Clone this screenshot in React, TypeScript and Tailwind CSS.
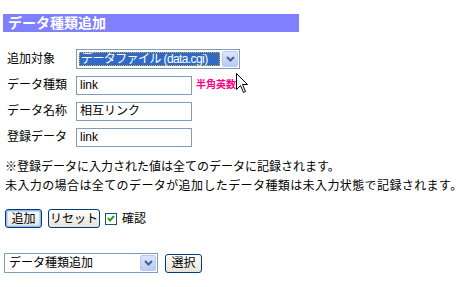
import React from 'react';

const font = { fontFamily: '"Liberation Sans", "Noto Sans CJK JP", sans-serif' };

function Chevron() {
  return (
    <svg width="9" height="6" viewBox="0 0 9 6" className="block">
      <path d="M1 1 L4.5 4.5 L8 1" stroke="#4d6185" strokeWidth="2" fill="none" />
    </svg>
  );
}

function DropButton() {
  return (
    <div className="w-[16px] h-[16px] shrink-0 flex items-center justify-center border border-[#b8c9ef] rounded-[2px] bg-gradient-to-b from-[#dbe6fe] to-[#b7cbf7]">
      <Chevron />
    </div>
  );
}

function XpButton({ label, focused, w }: { label: string; focused?: boolean; w: string }) {
  return (
    <button
      className={`${w} h-[19px] rounded-[3px] border border-[#003c74] bg-gradient-to-b from-white to-[#e6e3d6] text-[12px] leading-none text-black flex items-center justify-center ${focused ? 'shadow-[inset_0_0_0_1px_#9ab9f0,inset_0_0_0_2px_#c4d7f8]' : ''}`}
    >
      {label}
    </button>
  );
}

export default function App() {
  const rows: [string, React.ReactNode][] = [
    [
      '追加対象',
      <div className="w-[164px] h-[20px] border border-[#7f9db9] bg-white flex items-center pl-[2px] pr-[1px] gap-[2px]">
        <div className="flex-1 h-[14px] bg-[#316ac5] outline-1 outline-dotted outline-[#d8b040] -outline-offset-1 text-white text-[12px] leading-[14px] pl-[2px] tracking-[-0.6px] whitespace-nowrap overflow-hidden">
          データファイル (data.cgi)
        </div>
        <DropButton />
      </div>,
    ],
    [
      'データ種類',
      <div className="flex items-center">
        <div className="w-[116px] h-[19px] border border-[#7f9db9] bg-white text-[12px] leading-[17px] pl-[3px]">link</div>
        <span className="ml-[4px] text-[10px] font-bold text-[#ff0080] leading-none">半角英数</span>
      </div>,
    ],
    [
      'データ名称',
      <div className="w-[116px] h-[19px] border border-[#7f9db9] bg-white text-[12px] leading-[17px] pl-[3px]">相互リンク</div>,
    ],
    [
      '登録データ',
      <div className="w-[116px] h-[19px] border border-[#7f9db9] bg-white text-[12px] leading-[17px] pl-[3px]">link</div>,
    ],
  ];

  return (
    <div className="relative w-[469px] h-[287px] bg-white text-black overflow-hidden pt-[14px]" style={font}>
      <div className="ml-[3px] w-[296px] h-[18px] bg-[#8080ff] text-white font-bold text-[14px] leading-[18px] pl-[5px]">
        データ種類追加
      </div>

      <div className="mt-[14px] ml-[7px] flex flex-col">
        {rows.map(([label, ctl]) => (
          <div key={label} className="h-[26px] flex items-center">
            <span className="w-[69px] text-[12px] leading-none">{label}</span>
            {ctl}
          </div>
        ))}
      </div>

      <div className="mt-[8px] ml-[5px] text-[12px] leading-[19px] whitespace-nowrap">
        <div>※登録データに入力された値は全てのデータに記録されます。</div>
        <div className="tracking-[0.4px]">未入力の場合は全てのデータが追加したデータ種類は未入力状態で記録されます。</div>
      </div>

      <div className="mt-[13px] ml-[5px] flex items-center">
        <XpButton label="追加" focused w="w-[37px]" />
        <div className="ml-[6px]">
          <XpButton label="リセット" w="w-[52px]" />
        </div>
        <div className="ml-[5px] w-[12px] h-[12px] border border-[#1c5180] bg-white flex items-center justify-center">
          <svg width="8" height="7" viewBox="0 0 8 7">
            <path d="M1 3 L3 5.5 L7 1" stroke="#21a121" strokeWidth="2" fill="none" />
          </svg>
        </div>
        <span className="ml-[5px] text-[12px] leading-none">確認</span>
      </div>

      <div className="mt-[25px] ml-[4px] flex items-center">
        <div className="w-[154px] h-[20px] border border-[#7f9db9] bg-white flex items-center pl-[4px] pr-[1px]">
          <span className="flex-1 text-[12px] leading-none">データ種類追加</span>
          <DropButton />
        </div>
        <div className="ml-[7px]">
          <XpButton label="選択" w="w-[37px]" />
        </div>
      </div>

      <svg className="absolute left-[236px] top-[73px]" width="13" height="21" viewBox="0 0 13 21">
        <path
          d="M0.5 0.5 L0.5 16.5 L4.5 12.5 L7.5 19.5 L9.5 18.5 L6.5 11.5 L11.5 11.5 Z"
          fill="white"
          stroke="black"
          strokeWidth="1"
        />
      </svg>
    </div>
  );
}
